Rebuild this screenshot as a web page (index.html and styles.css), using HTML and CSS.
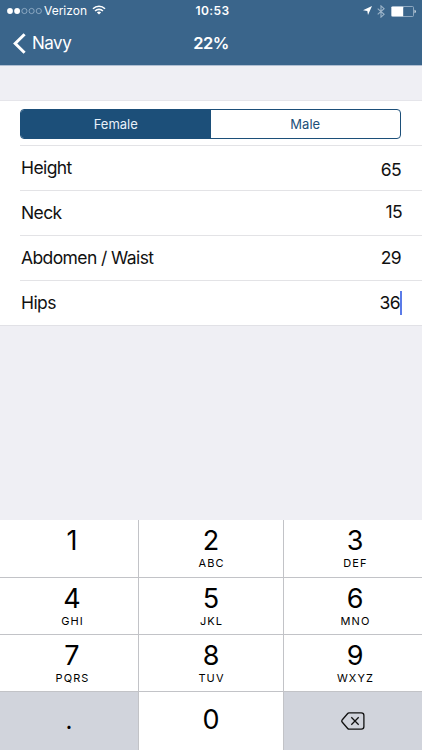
FILE: index.html
```html
<!DOCTYPE html>
<html lang="en">
<head>
    <meta charset="UTF-8">
    <meta name="viewport" content="width=device-width, initial-scale=1.0">
    <title>Navy</title>
    <link rel="stylesheet" href="styles.css">
</head>
<body>
    <header class="header">
        <div class="status-bar">
            <div class="status-left">
                <svg class="signal" width="36" height="8" viewBox="0 0 36 8">
                    <g fill="#fff">
                        <circle cx="3" cy="4" r="2.9"/>
                        <circle cx="10.1" cy="4" r="2.9"/>
                    </g>
                    <g fill="none" stroke="#a9c0d5" stroke-width="0.7">
                        <circle cx="17.4" cy="4" r="2.6"/>
                        <circle cx="24.6" cy="4" r="2.6"/>
                        <circle cx="31.8" cy="4" r="2.6"/>
                    </g>
                </svg>
                <span class="carrier">Verizon</span>
                <svg class="wifi" width="14" height="10" viewBox="0 0 14 10">
                    <g fill="none" stroke="#fff" stroke-width="1.6">
                        <path d="M1 3.8 C4.3 0.4 9.7 0.4 13 3.8"/>
                        <path d="M3.1 6 C5.3 3.8 8.7 3.8 10.9 6"/>
                    </g>
                    <path d="M4.9 7.4 C6.1 6.3 7.9 6.3 9.1 7.4 L7 9.5 Z" fill="#fff"/>
                </svg>
            </div>
            <span class="time">10:53</span>
            <div class="status-right">
                <svg class="location" width="9" height="9" viewBox="0 0 9 9">
                    <path d="M9 0 L5 9 L4.3 4.9 L0 4.3 Z" fill="#fff"/>
                </svg>
                <svg class="bluetooth" width="8" height="13" viewBox="0 0 8 13">
                    <path d="M0.7 3.6 L7.1 9.3 L4 12.1 V0.9 L7.1 3.7 L0.7 9.4" fill="none" stroke="#9cb4c9" stroke-width="1.1"/>
                </svg>
                <svg class="battery" width="25" height="11" viewBox="0 0 25 11">
                    <rect x="0.5" y="0.5" width="22" height="10" rx="1" fill="none" stroke="#a3bace" stroke-width="0.8"/>
                    <rect x="0.6" y="0.7" width="11.6" height="9.6" rx="0.6" fill="#fff"/>
                    <path d="M23.6 3.7 C25.1 4.2 25.1 6.8 23.6 7.3 Z" fill="#fff"/>
                </svg>
            </div>
        </div>
        <div class="nav-bar">
            <a class="back" href="#">
                <svg width="13" height="21" viewBox="0 0 13 21">
                    <path d="M11.6 1.2 L2.2 10.5 L11.6 19.8" fill="none" stroke="#fff" stroke-width="3"/>
                </svg>
                <span>Navy</span>
            </a>
            <h1 class="title">22%</h1>
        </div>
    </header>

    <main class="form">
        <div class="row row-segment">
            <div class="segment">
                <div class="segment-item active">Female</div>
                <div class="segment-item">Male</div>
            </div>
        </div>
        <div class="row">
            <span class="label">Height</span>
            <span class="value value-low">65</span>
        </div>
        <div class="row">
            <span class="label">Neck</span>
            <span class="value value-high">15</span>
        </div>
        <div class="row">
            <span class="label">Abdomen / Waist</span>
            <span class="value">29</span>
        </div>
        <div class="row row-last">
            <span class="label">Hips</span>
            <span class="value focused">36</span>
        </div>
    </main>

    <div class="keypad">
        <div class="key key-left"><span class="digit">1</span></div>
        <div class="key"><span class="digit">2</span><span class="letters">ABC</span></div>
        <div class="key key-right"><span class="digit">3</span><span class="letters">DEF</span></div>
        <div class="key key-left"><span class="digit">4</span><span class="letters">GHI</span></div>
        <div class="key"><span class="digit">5</span><span class="letters">JKL</span></div>
        <div class="key key-right"><span class="digit">6</span><span class="letters">MNO</span></div>
        <div class="key key-left"><span class="digit">7</span><span class="letters">PQRS</span></div>
        <div class="key"><span class="digit">8</span><span class="letters">TUV</span></div>
        <div class="key key-right"><span class="digit">9</span><span class="letters">WXYZ</span></div>
        <div class="key key-gray"><span class="dot">.</span></div>
        <div class="key key-zero"><span class="digit">0</span></div>
        <div class="key key-gray">
            <svg class="backspace" width="24" height="18" viewBox="0 0 24 18">
                <g fill="none" stroke="#111" stroke-linejoin="round">
                    <path d="M8 0.9 H20.3 Q22.9 0.9 22.9 3.5 V14.5 Q22.9 17.1 20.3 17.1 H8 Q7.2 17.1 6.7 16.5 L1.1 10 Q0.4 9 1.1 8 L6.7 1.5 Q7.2 0.9 8 0.9 Z" stroke-width="1.3"/>
                    <path d="M10.3 5.3 L17.7 12.7 M17.7 5.3 L10.3 12.7" stroke-width="1.3"/>
                </g>
            </svg>
        </div>
    </div>
</body>
</html>
```

FILE: styles.css
```css
* {
    box-sizing: border-box;
}
body {
    margin: 0;
    height: 750px;
    display: flex;
    flex-direction: column;
    overflow: hidden;
    background-color: #efeff4;
    color: #111;
    font-family: Inter, "Liberation Sans", sans-serif;
}
svg {
    display: block;
    flex-shrink: 0;
}

/* header */
.header {
    height: 66px;
    background-color: #3a658b;
    border-bottom: 1px solid #b0bfd2;
    color: #fff;
}
.status-bar {
    height: 22px;
    padding: 0 6px 0 7px;
    display: grid;
    grid-template-columns: 1fr auto 1fr;
    align-items: center;
}
.status-left,
.status-right {
    display: flex;
    align-items: center;
}
.status-right {
    justify-content: flex-end;
}
.carrier {
    margin-left: 1px;
    font-size: 12px;
    line-height: 22px;
}
.wifi {
    margin-left: 5px;
    margin-bottom: 2px;
}
.time {
    padding-left: 2px;
    font-size: 12px;
    font-weight: 600;
    line-height: 22px;
    letter-spacing: 0.4px;
}
.location {
    margin-bottom: 1px;
}
.bluetooth {
    margin-left: 5px;
}
.battery {
    margin-left: 6px;
}
.nav-bar {
    height: 42px;
    padding: 0 13px;
    display: grid;
    grid-template-columns: 1fr auto 1fr;
    align-items: center;
}
.back {
    display: flex;
    align-items: center;
    gap: 6px;
    color: #fff;
    font-size: 17px;
    line-height: 22px;
    letter-spacing: -0.5px;
    text-decoration: none;
}
.title {
    margin: 0;
    font-size: 16.5px;
    font-weight: 600;
    line-height: 22px;
    letter-spacing: -0.5px;
}

/* form */
.form {
    margin-top: 35px;
    height: 224px;
    padding-left: 20px;
    background-color: #fff;
    box-shadow: 0 -1px 0 #e5e5ea, 0 1px 0 #e1e1e6;
}
.row {
    height: 45px;
    padding: 0 21px 0 1px;
    display: flex;
    justify-content: space-between;
    align-items: center;
    border-bottom: 1px solid #e3e3e6;
    font-size: 17.5px;
    line-height: 24px;
    letter-spacing: -0.6px;
}
.row-segment {
    padding: 1px 20px 0 0;
}
.row-last {
    height: 44px;
    padding-right: 20px;
    border-bottom: none;
}
.segment {
    width: 381px;
    height: 30px;
    display: flex;
    border: 1px solid #1c4f79;
    border-radius: 4px;
    overflow: hidden;
    font-size: 13px;
    line-height: 29px;
    letter-spacing: 0;
    text-align: center;
}
.segment-item {
    flex: 1;
    color: #1c4f79;
}
.segment-item.active {
    background-color: #1c4f79;
    color: #e8f1fa;
}
.value-low {
    margin-top: 3px;
}
.value-high {
    margin-right: -1px;
    margin-bottom: 2px;
}
.focused {
    border-right: 2px solid #5b7be8;
}

/* keypad */
.keypad {
    margin-top: auto;
    height: 230px;
    display: grid;
    grid-template-columns: 138px 144px 138px;
    grid-template-rows: 57px 56px 56px 58px;
    gap: 1px;
    background-color: #c2c3c7;
}
.key {
    padding-top: 5px;
    display: flex;
    flex-direction: column;
    align-items: center;
    background-color: #fff;
    color: #000;
}
.key-left {
    padding-left: 6px;
}
.key-right {
    padding-left: 4px;
}
.digit {
    font-size: 27px;
    line-height: 32px;
}
.letters {
    padding-left: 1px;
    font-size: 11px;
    line-height: 13px;
    letter-spacing: 1.1px;
}
.key-gray {
    padding-top: 0;
    justify-content: center;
    background-color: #d1d4dc;
}
.key-zero {
    padding-top: 12px;
}
.dot {
    font-size: 24px;
    line-height: 30px;
}
```
